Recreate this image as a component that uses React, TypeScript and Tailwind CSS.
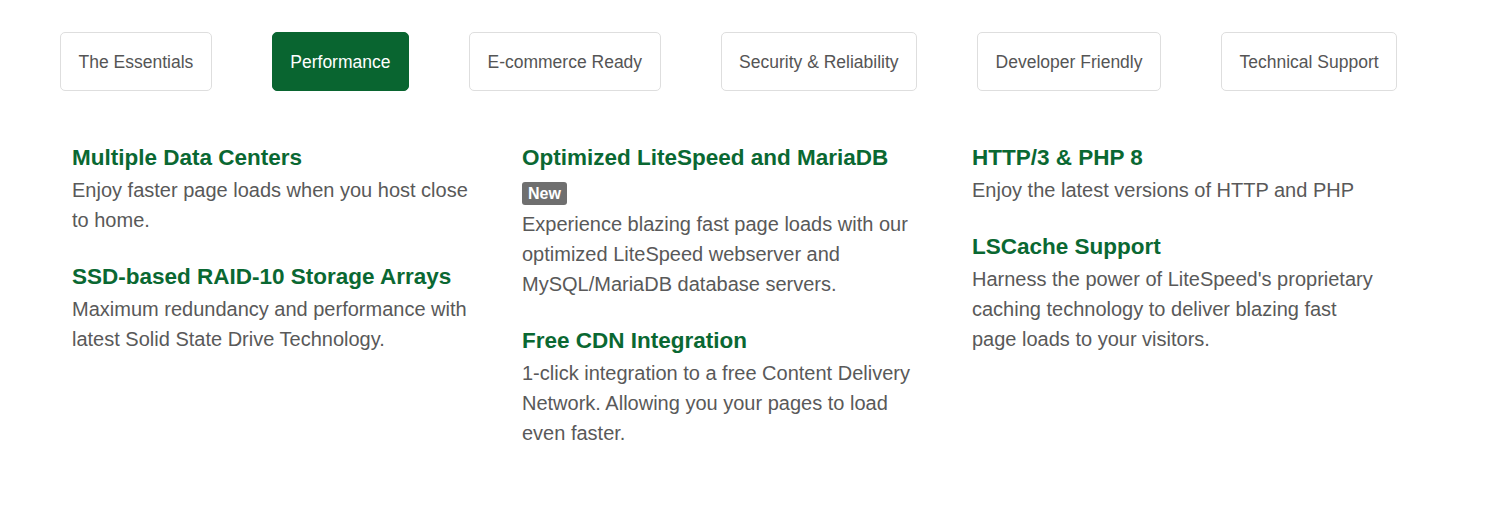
const tabs = [
  "The Essentials",
  "Performance",
  "E-commerce Ready",
  "Security & Reliability",
  "Developer Friendly",
  "Technical Support",
];

type Feature = { title: string; text: string; badge?: string };

const columns: Feature[][] = [
  [
    {
      title: "Multiple Data Centers",
      text: "Enjoy faster page loads when you host close to home.",
    },
    {
      title: "SSD-based RAID-10 Storage Arrays",
      text: "Maximum redundancy and performance with latest Solid State Drive Technology.",
    },
  ],
  [
    {
      title: "Optimized LiteSpeed and MariaDB",
      badge: "New",
      text: "Experience blazing fast page loads with our optimized LiteSpeed webserver and MySQL/MariaDB database servers.",
    },
    {
      title: "Free CDN Integration",
      text: "1-click integration to a free Content Delivery Network. Allowing you your pages to load even faster.",
    },
  ],
  [
    {
      title: "HTTP/3 & PHP 8",
      text: "Enjoy the latest versions of HTTP and PHP",
    },
    {
      title: "LSCache Support",
      text: "Harness the power of LiteSpeed's proprietary caching technology to deliver blazing fast page loads to your visitors.",
    },
  ],
];

export default function App() {
  const active = "Performance";

  return (
    <div className="min-h-[524px] bg-white pl-[60px] pt-[32px] font-['Liberation_Sans',Arial,sans-serif]">
      <div className="flex gap-[60px]">
        {tabs.map((tab) => (
          <button
            className={
              tab === active
                ? "h-[59px] rounded-[5px] border border-[#096530] bg-[#096530] px-[17.5px] pt-[1px] text-[17.5px] text-white"
                : "h-[59px] rounded-[5px] border border-[#dedede] bg-white px-[17.5px] pt-[1px] text-[17.5px] text-[#555]"
            }
            key={tab}
            type="button"
          >
            {tab}
          </button>
        ))}
      </div>

      <div className="mt-[50px] flex pl-[12px]">
        {columns.map((features, i) => (
          <div className="w-[450px]" key={i}>
            <div className="w-[406px]">
              {features.map((f) => (
                <div className="mb-[25px]" key={f.title}>
                  <h3 className="text-[22.5px] font-bold leading-[34px] text-[#0a6832]">{f.title}</h3>
                  {f.badge ? (
                    <span className="mt-[7px] inline-block rounded-[3px] bg-[#6f6f6f] px-[6px] text-[16px] font-bold leading-[23px] text-white">
                      {f.badge}
                    </span>
                  ) : null}
                  <p className={`${f.badge ? "mt-[3px]" : ""} text-[20px] leading-[30px] text-[#595959]`}>{f.text}</p>
                </div>
              ))}
            </div>
          </div>
        ))}
      </div>
    </div>
  );
}
